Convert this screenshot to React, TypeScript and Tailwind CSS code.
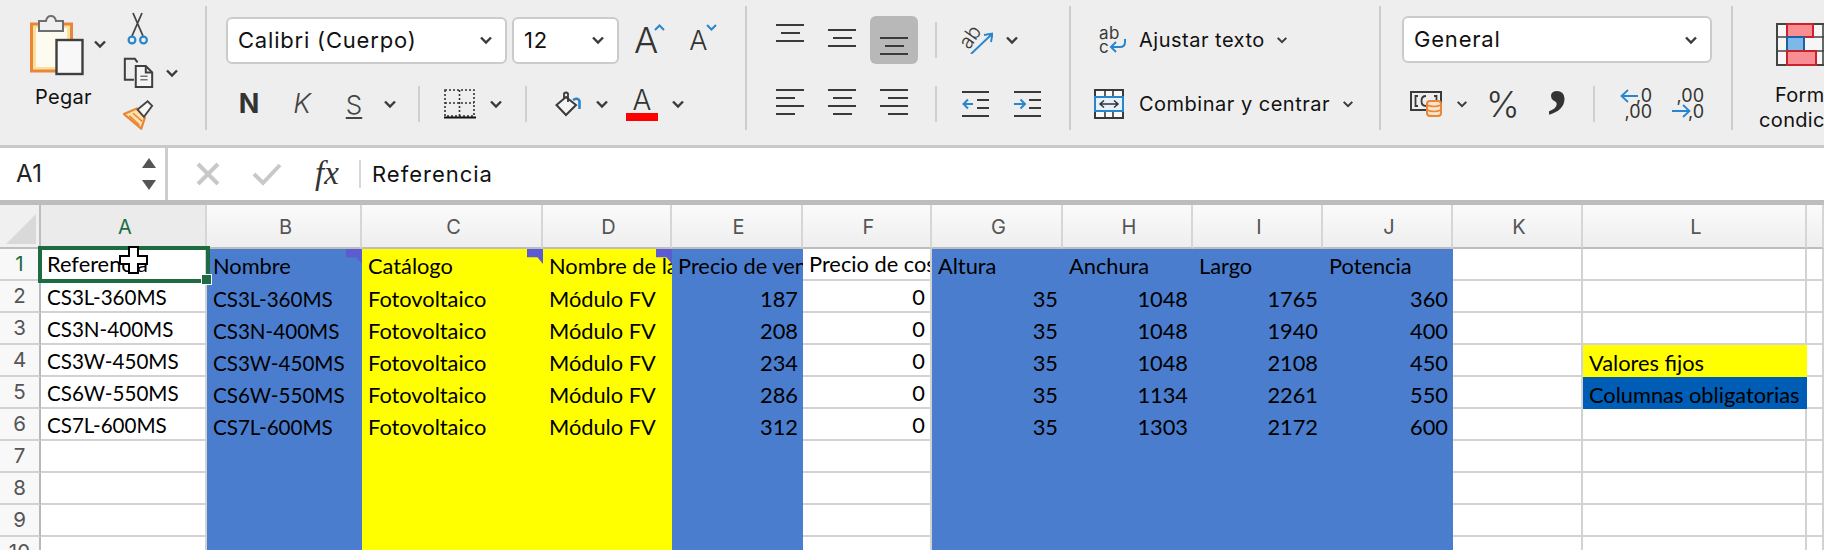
import React from 'react';

const dark = '#3a3a38';
const blue = '#2a86cc';

function Chevron({ size = 14 }: { size?: number }) {
  return (
    <svg width={size} height={size} viewBox="0 0 14 14" fill="none">
      <path d="M2 4.5 L7 9.5 L12 4.5" stroke={dark} strokeWidth="2.4" />
    </svg>
  );
}

function PasteIcon() {
  return (
    <svg width="56" height="64" viewBox="0 0 56 64">
      <rect x="1.5" y="10" width="40" height="47" fill="#fbdf9a" stroke="#e8863a" strokeWidth="3" />
      <rect x="6" y="14" width="31" height="39" fill="#fdfaf0" />
      <path d="M9 7 H16 Q17 2 21 2 Q25 2 26 7 H33 V17 H9 Z" fill="#efefef" stroke="#6e6e6e" strokeWidth="2" />
      <rect x="26.5" y="26" width="26" height="34" fill="#f8f8f8" stroke="#3f3f3f" strokeWidth="2.4" />
    </svg>
  );
}

function ScissorsIcon() {
  return (
    <svg width="24" height="34" viewBox="0 0 24 34" fill="none">
      <path d="M6 24 L16 1 M17 24 L7 1" stroke="#444" strokeWidth="1.8" />
      <circle cx="6" cy="28" r="3.4" stroke={blue} strokeWidth="2.2" />
      <circle cx="17.5" cy="28" r="3.4" stroke={blue} strokeWidth="2.2" />
    </svg>
  );
}

function CopyIcon() {
  return (
    <svg width="31" height="31" viewBox="0 0 34 34" fill="none" stroke="#3f3f3f" strokeWidth="2.2">
      <path d="M12 25 H2 V2 H13 L16 6" />
      <path d="M14 10 H25 L32 17 V33 H14 Z" fill="#f4f4f4" />
      <path d="M25 10 V17 H32" />
      <path d="M19 21 H27 M19 25 H27" strokeWidth="1.6" stroke="#777" />
    </svg>
  );
}

function BrushIcon() {
  return (
    <svg width="31" height="30" viewBox="0 0 34 32" fill="none">
      <path d="M1 15 L15 9 L24 19 L20 31 Z" fill="#fbe0a8" stroke="#e8863a" strokeWidth="2.4" />
      <path d="M7 17 L18 27 M11 14 L21 23" stroke="#e8863a" strokeWidth="1.6" />
      <path d="M16 10 L27 1 L32 6 L23 18 Z" fill="#f7f7f7" stroke="#444" strokeWidth="2" />
    </svg>
  );
}

function BordersIcon() {
  return (
    <svg width="32" height="30" viewBox="0 0 32 30" fill="none">
      <rect x="1" y="1" width="29" height="26" stroke="#333" strokeWidth="1.6" strokeDasharray="2 2" />
      <path d="M1 14 H30 M15.5 1 V27" stroke="#333" strokeWidth="1.6" strokeDasharray="2 2" />
      <path d="M0 28.5 H32" stroke="#111" strokeWidth="2" />
    </svg>
  );
}

function FillIcon() {
  return (
    <svg width="27" height="26" viewBox="0 0 27 26" fill="none">
      <path d="M1.5 14 L11 6 L21 14 L11 24 Z" fill="#f4f4f4" stroke="#3a3a3a" strokeWidth="2" />
      <path d="M9 8 V2.5 Q11 0.5 13 2.5 V11" stroke="#3a3a3a" strokeWidth="1.8" />
      <path d="M18 9 Q23 6 24.5 10 L24.5 18" stroke={blue} strokeWidth="2.6" />
    </svg>
  );
}

function AlignLines({ rows, offset = 0 }: { rows: [number, number][]; offset?: number }) {
  return (
    <svg width="28" height="30" viewBox="0 0 28 30" fill="none" overflow="visible">
      {rows.map(([a, b], i) => (
        <path key={i} d={`M${a} ${offset + i * 8 + 2} H${b}`} stroke={dark} strokeWidth="2" />
      ))}
    </svg>
  );
}

function OrientIcon() {
  return (
    <svg width="34" height="28" viewBox="0 0 34 28" fill="none">
      <text x="0" y="17" transform="rotate(-55 12 11)" fontFamily="Inter" fontSize="20" fontWeight="300" fill={dark}>ab</text>
      <path d="M12 28 L33 8 M25 9 L33.5 7.5 L32 16" stroke={blue} strokeWidth="1.9" />
    </svg>
  );
}

function IndentIcon({ out }: { out?: boolean }) {
  return (
    <svg width="27" height="30" viewBox="0 0 27 30" fill="none">
      <path d="M0 3 H27 M0 27 H27 M15 11 H27 M15 19 H27" stroke={dark} strokeWidth="2" />
      {out ? (
        <path d="M11 15 H1.5 M6 10.5 L1.5 15 L6 19.5" stroke={blue} strokeWidth="2" />
      ) : (
        <path d="M0 15 H11 M6.5 10.5 L11 15 L6.5 19.5" stroke={blue} strokeWidth="2" />
      )}
    </svg>
  );
}

function WrapIcon() {
  return (
    <svg width="28" height="28" viewBox="0 0 28 28" fill="none">
      <text x="0" y="13" fontFamily="Inter" fontSize="17" fill={dark}>ab</text>
      <text x="0" y="27" fontFamily="Inter" fontSize="17" fill={dark}>c</text>
      <path d="M26 13 V16 Q26 21 21 21 H12 M17 16 L12 21 L17 26" stroke={blue} strokeWidth="2" />
    </svg>
  );
}

function MergeIcon() {
  return (
    <svg width="30" height="30" viewBox="0 0 30 30" fill="none">
      <rect x="1" y="1" width="28" height="28" stroke="#3a3a3a" strokeWidth="2" fill="#fafafa" />
      <path d="M11 1 V8 M19 1 V8 M11 22 V29 M19 22 V29" stroke="#3a3a3a" strokeWidth="1.6" />
      <rect x="1" y="8" width="28" height="14" fill="#e6f1fa" stroke={blue} strokeWidth="2" />
      <path d="M6 15 H24 M10 11.5 L6 15 L10 18.5 M20 11.5 L24 15 L20 18.5" stroke="#333" strokeWidth="1.5" />
    </svg>
  );
}

function CurrencyIcon() {
  return (
    <svg width="32" height="26" viewBox="0 0 32 26" fill="none">
      <rect x="1" y="1" width="30" height="18" stroke="#3a3a3a" strokeWidth="2" />
      <path d="M8 5 H5.5 V15 H8 M16 5 Q11.5 5 11.5 10 Q11.5 15 16 15 M24 5 H26.5 V15 H24" stroke="#3a3a3a" strokeWidth="1.8" />
      <rect x="17" y="10" width="14" height="15" rx="3" fill="#f9e3c8" stroke="#e8863a" strokeWidth="2" />
      <path d="M17 14 Q24 17 31 14 M17 19 Q24 22 31 19" stroke="#e8863a" strokeWidth="1.6" />
    </svg>
  );
}

function DecimalIcon({ more }: { more?: boolean }) {
  return (
    <div className="relative w-[32px] h-[32px] font-['Inter'] text-[18px] leading-[16px] text-[#333]">
      <span className="absolute right-0 top-0">{more ? ',00' : ',0'}</span>
      <span className="absolute right-0 top-[16px]">{more ? ',0' : ',00'}</span>
      <svg className="absolute left-0 top-0" width="32" height="32" viewBox="0 0 32 32" fill="none">
        {more ? (
          <path d="M0 23 H17 M11 17 L17.5 23 L11 29" stroke={blue} strokeWidth="1.8" />
        ) : (
          <path d="M18 8 H1.5 M8 2 L1.5 8 L8 14" stroke={blue} strokeWidth="1.8" />
        )}
      </svg>
    </div>
  );
}

function CondFormatIcon() {
  return (
    <svg width="60" height="43" viewBox="0 0 60 43" fill="none">
      <rect x="1" y="1" width="58" height="41" fill="#f6f6f6" stroke="#444" strokeWidth="2" />
      <path d="M11 1 V42 M47 1 V42 M1 14 H59 M1 28 H59" stroke="#444" strokeWidth="1.6" />
      <rect x="11" y="1" width="26" height="13" fill="#f98d94" stroke="#c8222a" strokeWidth="2" />
      <rect x="11" y="14" width="17" height="14" fill="#7db8ea" stroke="#1f5f9f" strokeWidth="2" />
      <rect x="11" y="28" width="29" height="14" fill="#f98d94" stroke="#c8222a" strokeWidth="2" />
    </svg>
  );
}

function Select({ label, className }: { label: string; className: string }) {
  return (
    <div className={`flex items-center justify-between h-[47px] rounded-[6px] border-2 border-[#cbcbcb] bg-white pl-[10px] pr-[12px] ${className}`}>
      <span className="text-[22px] tracking-[0.8px] text-[#111]">{label}</span>
      <Chevron />
    </div>
  );
}

function Sep() {
  return <div className="w-[2px] h-[36px] bg-[#cfcfcf]" />;
}

function Ribbon() {
  return (
    <div className="flex h-[145px] pt-[6px] bg-[#eeeeee] font-['Inter'] overflow-hidden">
      {/* portapapeles */}
      <div className="flex w-[207px] h-[124px] border-r-2 border-[#cdcdcd] shrink-0">
        <div className="ml-[30px] w-[62px] mt-[8px] flex flex-col items-start">
          <PasteIcon />
          <span className="mt-[7px] ml-[5px] text-[20px] tracking-[0.3px] leading-[24px] text-[#111]">Pegar</span>
        </div>
        <div className="ml-[1px] mt-[31px]"><Chevron /></div>
        <div className="ml-[16px] mt-[6px] flex flex-col items-start">
          <div className="ml-[3px]"><ScissorsIcon /></div>
          <div className="flex items-center mt-[11px]">
            <CopyIcon />
            <div className="ml-[11px]"><Chevron /></div>
          </div>
          <div className="mt-[12px]"><BrushIcon /></div>
        </div>
      </div>

      {/* fuente */}
      <div className="w-[540px] h-[124px] border-r-2 border-[#cdcdcd] shrink-0 pl-[19px] pt-[10px]">
        <div className="flex items-center h-[48px]">
          <Select label="Calibri (Cuerpo)" className="w-[281px]" />
          <Select label="12" className="w-[107px] ml-[5px]" />
          <span className="relative ml-[15px] text-[36px] leading-none font-light text-[#333]">
            A
            <svg className="absolute left-[20px] top-[2px]" width="11" height="7" viewBox="0 0 11 7" fill="none"><path d="M1 6 L5.5 1.5 L10 6" stroke={blue} strokeWidth="2" /></svg>
          </span>
          <span className="relative ml-[31px] text-[27px] leading-none font-light text-[#333]">
            A
            <svg className="absolute left-[17px] -top-[3px]" width="11" height="7" viewBox="0 0 11 7" fill="none"><path d="M1 1 L5.5 5.5 L10 1" stroke={blue} strokeWidth="2" /></svg>
          </span>
        </div>
        <div className="flex items-center h-[48px] mt-[16px]">
          <span className="w-[46px] text-center text-[27px] font-bold text-[#333]">N</span>
          <span className="w-[60px] text-center text-[27px] italic font-light text-[#444]">K</span>
          <span className="w-[44px] text-center text-[26px] font-light text-[#444] underline underline-offset-[3px] decoration-[2px]">S</span>
          <div className="w-[28px] flex justify-center"><Chevron /></div>
          <div className="ml-[14px]"><Sep /></div>
          <div className="ml-[24px] w-[30px]"><BordersIcon /></div>
          <div className="ml-[8px] w-[28px] flex justify-center"><Chevron /></div>
          <div className="ml-[15px]"><Sep /></div>
          <div className="ml-[28px] w-[27px]"><FillIcon /></div>
          <div className="ml-[6px] w-[28px] flex justify-center"><Chevron /></div>
          <div className="ml-[10px] w-[32px] flex flex-col items-center">
            <span className="text-[28px] leading-[26px] font-light text-[#333]">A</span>
            <div className="w-[32px] h-[8px] bg-[#ff0000]" />
          </div>
          <div className="ml-[6px] w-[28px] flex justify-center"><Chevron /></div>
        </div>
      </div>

      {/* alineacion */}
      <div className="w-[324px] h-[124px] border-r-2 border-[#cdcdcd] shrink-0 pl-[17px] pt-[10px]">
        <div className="flex items-center h-[48px]">
          <div className="w-[52px] flex justify-center"><AlignLines rows={[[0, 28], [5, 24], [0, 28]]} offset={-2} /></div>
          <div className="w-[52px] flex justify-center"><AlignLines rows={[[0, 28], [5, 24], [0, 28]]} offset={3} /></div>
          <div className="w-[52px] flex justify-center"><div className="w-[48px] h-[48px] rounded-[6px] bg-[#b8b8b8] flex items-center justify-center"><AlignLines rows={[[0, 28], [5, 24], [0, 28]]} offset={11} /></div></div>
          <div className="ml-[15px]"><Sep /></div>
          <div className="ml-[22px]"><OrientIcon /></div>
          <div className="ml-[12px]"><Chevron /></div>
        </div>
        <div className="flex items-center h-[48px] mt-[16px]">
          <div className="w-[52px] flex justify-center"><AlignLines rows={[[0, 28], [0, 19], [0, 28], [0, 19]]} offset={-1} /></div>
          <div className="w-[52px] flex justify-center"><AlignLines rows={[[0, 28], [5, 24], [0, 28], [5, 24]]} offset={-1} /></div>
          <div className="w-[52px] flex justify-center"><AlignLines rows={[[0, 28], [8, 28], [0, 28], [8, 28]]} offset={-1} /></div>
          <div className="ml-[15px]"><Sep /></div>
          <div className="ml-[25px]"><IndentIcon out /></div>
          <div className="ml-[25px]"><IndentIcon /></div>
        </div>
      </div>

      {/* ajustar */}
      <div className="w-[310px] h-[124px] border-r-2 border-[#cdcdcd] shrink-0 pt-[10px] text-[20px] tracking-[0.5px] text-[#111]">
        <div className="flex items-center h-[48px] pl-[28px]">
          <WrapIcon />
          <span className="ml-[12px]">Ajustar texto</span>
          <div className="ml-[11px]"><Chevron size={12} /></div>
        </div>
        <div className="flex items-center h-[48px] mt-[16px] pl-[23px]">
          <MergeIcon />
          <span className="ml-[15px]">Combinar y centrar</span>
          <div className="ml-[12px]"><Chevron size={12} /></div>
        </div>
      </div>

      {/* numero */}
      <div className="w-[352px] h-[124px] border-r-2 border-[#cdcdcd] shrink-0 pl-[21px] pt-[10px]">
        <Select label="General" className="w-[310px]" />
        <div className="flex items-center h-[48px] mt-[17px]">
          <div className="ml-[8px]"><CurrencyIcon /></div>
          <div className="ml-[14px]"><Chevron size={12} /></div>
          <span className="ml-[18px] w-[32px] text-[36px] leading-none font-light text-[#333]">%</span>
          <span className="ml-[30px] w-[17px] h-[48px] -mt-[6px] font-['Liberation_Serif'] text-[78px] leading-[0px] font-bold text-[#333]">,</span>
          <div className="ml-[28px]"><Sep /></div>
          <div className="ml-[25px]"><DecimalIcon /></div>
          <div className="ml-[20px]"><DecimalIcon more /></div>
        </div>
      </div>

      {/* formato condicional */}
      <div className="w-[164px] shrink-0 pt-[17px] flex flex-col text-[20px] tracking-[0.3px] leading-[25px] text-[#111] text-center whitespace-nowrap">
        <div className="ml-[43px] w-[60px]"><CondFormatIcon /></div>
        <span className="mt-[17px]">Formato</span>
        <span>condicional</span>
      </div>
    </div>
  );
}

function FormulaBar() {
  return (
    <div className="flex h-[60px] border-t-[3px] border-b-[5px] border-t-[#c9c9c9] border-b-[#bdbdbd] bg-white font-['Inter']">
      <div className="flex items-center justify-between w-[168px] border-r-[3px] border-[#cdcdcd] pl-[16px] pr-[9px]">
        <span className="text-[24px] tracking-[0.5px] text-[#222]">A1</span>
        <div className="flex flex-col gap-[12px]">
          <div className="w-0 h-0 border-x-[7px] border-x-transparent border-b-[10px] border-b-[#555]" />
          <div className="w-0 h-0 border-x-[7px] border-x-transparent border-t-[10px] border-t-[#555]" />
        </div>
      </div>
      <div className="flex items-center pl-[28px]">
        <svg width="24" height="24" viewBox="0 0 24 24" fill="none"><path d="M2 2 L22 22 M22 2 L2 22" stroke="#c8c8c8" strokeWidth="4" /></svg>
        <svg className="ml-[32px]" width="30" height="24" viewBox="0 0 30 24" fill="none"><path d="M2 12 L11 21 L28 3" stroke="#c8c8c8" strokeWidth="4" /></svg>
        <span className="ml-[33px] w-[30px] font-['Liberation_Serif'] italic text-[33px] text-[#333]">fx</span>
        <div className="ml-[14px] w-[2px] h-[28px] bg-[#d8d8d8]" />
        <span className="ml-[11px] text-[22px] tracking-[1px] text-[#111]">Referencia</span>
      </div>
    </div>
  );
}

const columns = ['A', 'B', 'C', 'D', 'E', 'F', 'G', 'H', 'I', 'J', 'K', 'L', ''];
const blueFill = 'bg-[#4a7dce]';
const yellowFill = 'bg-[#ffff00]';
const fills: Record<string, string> = { B: blueFill, C: yellowFill, D: yellowFill, E: blueFill, G: blueFill, H: blueFill, I: blueFill, J: blueFill };

const header = ['Referencia', 'Nombre', 'Catálogo', 'Nombre de la', 'Precio de venta', 'Precio de coste', 'Altura', 'Anchura', 'Largo', 'Potencia'];
const data: (string | number)[][] = [
  ['CS3L-360MS', 'CS3L-360MS', 'Fotovoltaico', 'Módulo FV', 187, 0, 35, 1048, 1765, 360],
  ['CS3N-400MS', 'CS3N-400MS', 'Fotovoltaico', 'Módulo FV', 208, 0, 35, 1048, 1940, 400],
  ['CS3W-450MS', 'CS3W-450MS', 'Fotovoltaico', 'Módulo FV', 234, 0, 35, 1048, 2108, 450],
  ['CS6W-550MS', 'CS6W-550MS', 'Fotovoltaico', 'Módulo FV', 286, 0, 35, 1134, 2261, 550],
  ['CS7L-600MS', 'CS7L-600MS', 'Fotovoltaico', 'Módulo FV', 312, 0, 35, 1303, 2172, 600],
];

function Note() {
  return <div className="absolute top-0 right-0 w-[16px] h-[15px] bg-[#5b5bd2] [clip-path:polygon(0_0,100%_0,100%_100%,65%_55%,0_55%)]" />;
}

function Cell({ col, row }: { col: string; row: number }) {
  let value: string | number | undefined;
  const idx = columns.indexOf(col);
  if (row === 1) value = header[idx];
  else if (row <= 6) value = data[row - 2][idx];
  let fill = fills[col];
  if (col === 'L' && row === 4) { fill = yellowFill; value = 'Valores fijos'; }
  if (col === 'L' && row === 5) { fill = 'bg-[#005db5]'; value = 'Columnas obligatorias'; }
  const numeric = typeof value === 'number';
  const isRef = row > 1 && (col === 'A' || col === 'B');
  return (
    <div className={`relative flex items-end pl-[6px] overflow-hidden whitespace-nowrap leading-[28px] text-black ${isRef ? 'text-[20.6px]' : 'text-[21.8px]'} ${row === 1 ? 'pb-[1px]' : ''} ${numeric ? 'justify-end pr-[5px]' : ''} ${fill ?? 'bg-white border-r-2 border-b-2 border-[#d2d2d2]'}`}>
      {value}
      {row === 1 && (col === 'B' || col === 'C' || col === 'D') && <Note />}
    </div>
  );
}

function Sheet() {
  const rows = [1, 2, 3, 4, 5, 6, 7, 8, 9, 10];
  return (
    <div className="relative grid grid-cols-[41px_166px_155px_181px_129px_131px_129px_131px_130px_130px_130px_130px_224px_1fr] grid-rows-[44px_repeat(10,32px)] font-['Lato']">
      <div className="bg-[#f0f0f0] border-r-2 border-b-2 border-[#bdbdbd] flex items-end justify-end p-[3px]">
        <div className="w-[30px] h-[30px] bg-[#d9d9d9] [clip-path:polygon(100%_0,100%_100%,0_100%)]" />
      </div>
      {columns.map((c) => (
        <div key={c} className={`pl-[4px] pt-[1px] border-r-2 border-r-[#d6d6d6] border-b-2 border-b-[#bdbdbd] flex items-center justify-center font-['Inter'] text-[20px] ${c === 'A' ? 'bg-[#ebebeb] text-[#1e6b41]' : 'bg-gradient-to-b from-[#fbfbfb] to-[#eeeeee] text-[#555]'}`}>
          {c}
        </div>
      ))}
      {rows.map((r) => (
        <React.Fragment key={r}>
          <div className={`flex items-center justify-center border-r-2 border-r-[#b8b8b8] border-b-2 border-b-[#d2d2d2] bg-[#f8f8f8] font-['Inter'] text-[20.5px] ${r === 1 ? 'text-[#1e6b41]' : 'text-[#555]'}`}>{r}</div>
          {columns.map((c) => <Cell key={c} col={c} row={r} />)}
        </React.Fragment>
      ))}
      {/* seleccion A1 */}
      <div className="absolute left-[38px] top-[41px] w-[172px] h-[37px] border-[4px] border-[#1e6b41] pointer-events-none">
        <div className="absolute -right-[6px] -bottom-[6px] w-[11px] h-[11px] bg-[#1e6b41] border border-white" />
      </div>
      {/* cursor */}
      <svg className="absolute left-[119px] top-[41px] pointer-events-none" width="30" height="29" viewBox="0 0 30 29">
        <path d="M10 1 H19 V10 H28 V18 H19 V27 H10 V18 H1 V10 H10 Z" fill="#fff" stroke="#000" strokeWidth="2" />
      </svg>
    </div>
  );
}

export default function App() {
  return (
    <div className="w-[1824px] h-[550px] overflow-hidden bg-white">
      <Ribbon />
      <FormulaBar />
      <Sheet />
    </div>
  );
}
